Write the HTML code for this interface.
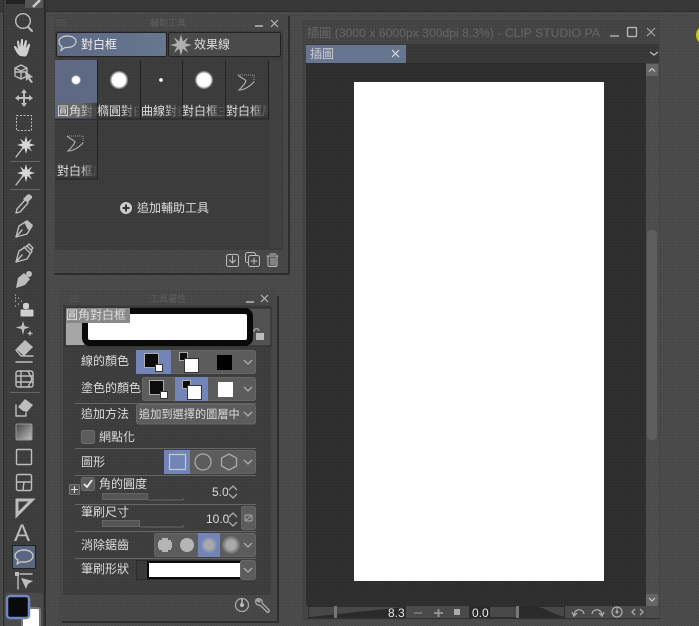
<!DOCTYPE html>
<html><head><meta charset="utf-8"><style>
html,body{margin:0;padding:0;background:#4a4a4a;width:699px;height:626px;overflow:hidden}
svg{display:block}
text{font-family:"Liberation Sans","Noto Sans CJK TC",sans-serif;font-size:12px;fill:#dcdcdc}
.i{fill:none;stroke:#bdbdbd;stroke-width:1.4;stroke-linejoin:round;stroke-linecap:round}
.t{stroke-width:1}
.f{fill:#bdbdbd;stroke:none}
.c{fill:#5c5c5c;stroke:#666;stroke-width:1}
.w{fill:#fff}.k{fill:#0c0c0c;stroke:#aaa;stroke-width:1}
.v{fill:none;stroke:#aaa;stroke-width:1.3}
</style></head><body>
<svg width="699" height="626" viewBox="0 0 699 626" xmlns="http://www.w3.org/2000/svg">
<defs>
<pattern id="t" width="3" height="3" patternUnits="userSpaceOnUse"><rect width="1" height="1" fill="#000" opacity=".07"/><rect x="2" y="1" width="1" height="1" fill="#fff" opacity=".03"/></pattern>
<linearGradient id="fd"><stop offset="0" stop-color="#3b3b3b" stop-opacity="0"/><stop offset="1" stop-color="#3b3b3b" stop-opacity=".95"/></linearGradient>
<linearGradient id="gr" x1="0" y1="0" x2="1" y2="1"><stop offset="0" stop-color="#444"/><stop offset="1" stop-color="#c0c0c0"/></linearGradient>
<linearGradient id="tb" x1="0" y1="0" x2="1" y2="0"><stop offset="0" stop-color="#5e6a84"/><stop offset="1" stop-color="#687690"/></linearGradient>
<radialGradient id="dot"><stop offset=".7" stop-color="#fff"/><stop offset="1" stop-color="#fff" stop-opacity="0"/></radialGradient>
<radialGradient id="aa"><stop offset=".5" stop-color="#aaa"/><stop offset="1" stop-color="#aaa" stop-opacity=".15"/></radialGradient>
<path id="star" d="M0-9 1.600-3 6-6.500 3.400-1.600 9 0 3.400 1.600 6 6.500 1.600 3 0 9-1.600 3-6 6.500-3.400 1.600-9 0-3.400-1.600-6-6.500-1.600-3Z"/>
<g id="tail" fill="none"><path d="M-9-7H7V0" stroke="#999" stroke-width="1" stroke-dasharray="1 1"/><path d="M-9-7C-6-4-2-3-1-1-2 2-5 5-8 8-3 8 2 5 7 0" stroke="#b5b5b5" stroke-width="1.100"/></g>
</defs>
<rect width="699" height="626" fill="#4a4a4a"/>
<rect width="699" height="626" fill="url(#t)"/>
<!-- top bar -->
<rect width="699" height="11" fill="#383838"/><rect y="11" width="699" height="1" fill="#2c2c2c"/>
<!-- toolbar -->
<rect x="3" y="0" width="41" height="626" fill="#3d3d3d"/><rect x="44" y="0" width="2" height="626" fill="#2e2e2e"/><rect x="3" y="0" width="1" height="626" fill="#2e2e2e"/>
<rect x="3" y="0" width="41" height="626" fill="url(#t)"/>
<rect x="6" y="0" width="19" height="4" fill="#222"/><rect x="25" y="0" width="18" height="8" fill="#555"/><path d="M33 7 40 0" stroke="#ccc" stroke-width="2.500"/>
<circle cx="23" cy="21" r="7.300" class="i"/><path class="i" style="stroke-width:2" d="M28 27l4 4"/>
<path fill="#cfcfcf" d="M20 56c-3-2-5-6-6-9 0-2 2-1 3 1l1 1-1-7c0-2 2-2 2 0l1 5 1-7c0-1.500 2-1.500 2 0v7l2-6c.500-1.500 2-1 2 .5l-1 7 2-4c1-1.500 2.500-.5 2 1l-2 7c-1 3-2 4-3 4Z"/>
<path class="i" d="M21 65l6 3v8l-6 3-6-3v-8ZM15 68l6 3 6-3M21 71v8M15 72h12"/><path class="f" d="M25 71l8 6-3 1 3 4-2 1-3-4-2 2Z"/>
<path class="f" d="M24 89l3 4h-2v4h4v-2l4 3-4 3v-2h-4v4h2l-3 4-3-4h2v-4h-4v2l-4-3 4-3v2h4v-4h-2Z"/>
<rect x="16.500" y="115.500" width="15" height="15" class="i" style="stroke-dasharray:2 1.500;stroke-linecap:butt;stroke-width:1"/>
<use href="#star" x="26" y="145" fill="#d8d8d8"/><path class="i" d="M22 149l-6 8"/>
<rect x="10" y="161" width="30" height="1" fill="#666"/>
<use href="#star" x="26" y="173" fill="#d8d8d8"/><path class="i" d="M22 177l-6 8"/>
<rect x="10" y="189" width="30" height="1" fill="#666"/>
<path class="i" d="M25 200l-8 9-1 4 4-1 8-9"/><path class="f" d="M24 198l3-3 2-1 3 2 0 2-3 3-1 2-5-4Z"/>
<path class="i" d="M16 237l3-11 8-5 5 5-5 8Z"/><path class="f" d="M24 222l3-2 6 5-2 3-3 2Z"/><path class="i" d="M16 237l6-7"/>
<path class="i" d="M16 262l3-11 8-5 5 5-5 8ZM16 262l6-7M24 247l6 6"/><path class="i" d="M27 246l2-2 4 4-2 2"/>
<path class="f" d="M16 288l2-10 6-5 6 6-5 6Z"/><circle cx="29" cy="274" r="3" class="f"/>
<rect x="20.500" y="309.500" width="13" height="7" rx="1" fill="#d0d0d0"/><rect x="23" y="303" width="6" height="6" rx="2" fill="#d0d0d0"/><path d="M15 295h1M18 298h1M15 301h1M21 301h1M18 304h1M15 306h1M15 298h1" stroke="#aaa" stroke-width="1.500"/>
<path class="f" d="M23 322l1.500 5 5 1.500-5 1.500-1.500 6-1.500-6-6-1.500 6-1.500ZM30 331l.8 2.500 2.500.8-2.500.8-.8 2.500-.8-2.500-2.500-.8 2.500-.8Z" transform="translate(0,-1)"/>
<path class="f" d="M16 349l9-9 8 7-9 9Z"/><path class="i" d="M16 350l5 6h12"/><path class="i" d="M16 362h16"/>
<rect x="16" y="371" width="17" height="16" rx="2" class="i"/><path class="i" d="M16 376h17M16 382h17M21 371v16M28 371l4 8-4 8"/>
<rect x="10" y="392" width="30" height="1" fill="#666"/>
<path class="i" d="M16 405v11h10v-3"/><path class="f" d="M25 399l8 6-6 7-4-1-5-4Z"/>
<rect x="16" y="424" width="16" height="16" rx="1.500" fill="url(#gr)" stroke="#999"/>
<rect x="16.500" y="449.500" width="15" height="15" rx="1" class="i"/>
<rect x="16.500" y="474.500" width="15" height="16" rx="1.500" class="i"/><path class="i" d="M17 482h14M24 482l-1 8"/>
<path d="M17 500h15l-15 15Z" fill="none" stroke="#bdbdbd" stroke-width="3"/>
<text x="14" y="541" style="font-size:24px;fill:#bbb">A</text>
<rect x="12.500" y="545.500" width="23" height="23" fill="#5a6680" stroke="#1f2328"/>
<path class="i" style="stroke:#c8c8c8" d="M24 550c5 0 9 2.500 9 6s-4 6-9 6c-1 0-2 0-3-.3l-4 2.300 1-4c-2-1-3-2.500-3-4 0-3.500 4-6 9-6Z"/>
<path class="i" d="M18 574v15M20 574h12"/><rect x="15" y="572" width="4" height="4" class="f"/><path class="f" d="M21 578l12 3-5 3-2 5Z"/>
<rect x="5" y="593" width="38" height="33" fill="#4a4a4a"/>
<rect x="22" y="608" width="18" height="22" rx="2" fill="#fff" stroke="#777" stroke-width="2"/>
<rect x="7" y="596" width="22" height="22" rx="3" fill="#0a0a0a" stroke="#7187c0" stroke-width="2.500"/>

<!-- subtool panel -->
<rect x="54" y="14" width="234" height="259" fill="#474747"/>
<rect x="288" y="16" width="2" height="258" fill="#2e2e2e"/><rect x="54" y="273" width="236" height="2" fill="#2e2e2e"/>
<rect x="55" y="31" width="228" height="219" fill="#3c3c3c"/>
<rect x="54" y="14" width="234" height="259" fill="url(#t)"/>
<text x="150" y="26" style="font-size:9px;fill:#5f5f5f">輔助工具</text>
<path d="M56 20h10M56 22.500h10M56 25h10" stroke="#555"/>
<path d="M255 26h8" stroke="#bbb" stroke-width="1.500"/><path d="M271 20l7 7m0-7-7 7" stroke="#bbb" stroke-width="1.100"/>
<rect x="56.500" y="32.500" width="110" height="24" rx="2" fill="url(#tb)" stroke="#222"/>
<rect x="168.500" y="32.500" width="112" height="24" rx="2" fill="#4a4a4a" stroke="#222"/>
<path d="M67 36c5 0 9 2 9 5.500s-4 6-9 6h-2l-4 3 1-4c-2-1-3-2.500-3-5 0-3.500 4-5.500 8-5.500Z" fill="none" stroke="#ccc" stroke-width="1.200"/>
<text x="81" y="48.500" style="font-size:12px;fill:#eee">對白框</text>
<use href="#star" x="181" y="45" fill="#b0b0b0" transform="translate(-36.200,-9) scale(1.200)"/>
<text x="194" y="48.500" style="font-size:12px;fill:#ddd">效果線</text>
<rect x="270" y="60" width="12" height="188" fill="#414141"/>
<rect x="55" y="60" width="42" height="59" fill="#5e6a84"/>
<g fill="none" stroke="#222"><path d="M97.500 60v59H55M140.500 60v59H97M182.500 60v59H140M225.500 60v59H182M268.500 60v59H225M97.500 120v59H55"/></g>
<circle cx="76" cy="80" r="5" fill="url(#dot)"/><circle cx="119" cy="80" r="9.500" fill="url(#dot)"/><circle cx="161" cy="80" r="2.200" fill="url(#dot)"/><circle cx="204" cy="80" r="9.500" fill="url(#dot)"/>
<use href="#tail" x="247" y="82"/><use href="#tail" x="76" y="143"/>
<rect x="57" y="103" width="38" height="15" rx="2" fill="#666"/>
<svg x="55" y="102" width="42" height="17"><text x="2" y="13">圓角對白框</text></svg>
<svg x="97" y="102" width="43" height="17"><text x="0" y="13">橢圓對白框</text></svg>
<svg x="140" y="102" width="42" height="17"><text x="1" y="13">曲線對白框</text></svg>
<svg x="182" y="102" width="43" height="17"><text x="0" y="13">對白框主體</text></svg>
<svg x="225" y="102" width="43" height="17"><text x="1" y="13">對白框尾部</text></svg>
<svg x="55" y="162" width="42" height="17"><text x="2" y="13">對白框尾部</text></svg>
<rect x="80" y="103" width="17" height="15" fill="url(#fd)"/><rect x="122" y="103" width="18" height="15" fill="url(#fd)"/><rect x="164" y="103" width="18" height="15" fill="url(#fd)"/><rect x="207" y="103" width="18" height="15" fill="url(#fd)"/><rect x="250" y="103" width="18" height="15" fill="url(#fd)"/><rect x="80" y="163" width="17" height="15" fill="url(#fd)"/>
<circle cx="126" cy="208" r="6" fill="#ccc"/><path d="M126 204.500v7M122.500 208h7" stroke="#333" stroke-width="2"/>
<text x="137" y="212">追加輔助工具</text>
<rect x="226.500" y="254.500" width="12" height="12" rx="2" class="i t"/><path class="i t" d="M232.500 256v7m-3-3 3 3 3-3"/>
<rect x="245.500" y="252.500" width="10" height="10" rx="2" class="i t"/><rect x="248.500" y="255.500" width="11" height="11" rx="2" fill="#474747" stroke="#bdbdbd"/><path class="i t" d="M254 258v6M251 261h6"/>
<path class="i t" d="M267 256h11M268 256v9c0 1 .5 1.500 1.500 1.500h6c1 0 1.500-.5 1.500-1.500v-9M270 254h6M271 258v7M273 258v7M275 258v7"/>

<!-- tool property panel -->
<rect x="59" y="290" width="218" height="331" fill="#474747"/><rect x="277" y="296" width="2" height="326" fill="#2e2e2e"/><rect x="62" y="621" width="217" height="2" fill="#2e2e2e"/>
<rect x="63" y="305" width="208" height="290" fill="#3d3d3d"/>
<rect x="59" y="290" width="218" height="331" fill="url(#t)"/>
<text x="150" y="302" style="font-size:9px;fill:#5f5f5f">工具屬性</text>
<path d="M70 296h9M70 298.500h9M70 301h9" stroke="#555"/>
<path d="M246 302h8" stroke="#bbb" stroke-width="1.500"/><path d="M261 295l7 7m0-7-7 7" stroke="#bbb" stroke-width="1.100"/>
<rect x="65" y="308" width="206" height="38" fill="#525252" stroke="#2a2a2a"/>
<rect x="66" y="309" width="18" height="36" fill="#a6a6a6"/>
<rect x="85" y="311" width="165" height="32" rx="5" fill="#fff" stroke="#0a0a0a" stroke-width="6"/>
<rect x="66" y="308" width="64" height="15" fill="#888"/>
<text x="66" y="319">圓角對白框</text>
<rect x="256" y="333" width="8" height="7" fill="#bbb"/><path class="v" d="M254 332v-1c0-3 5-3 5 0"/>
<g fill="#666"><rect x="75" y="403" width="181" height="1"/><rect x="75" y="448" width="181" height="1"/><rect x="75" y="475" width="181" height="1"/><rect x="75" y="504" width="181" height="1"/><rect x="75" y="531" width="181" height="1"/><rect x="75" y="558" width="181" height="1"/></g>
<text x="81" y="365">線的顏色</text>
<rect x="136.500" y="350.500" width="119" height="23" rx="2" class="c"/><rect x="136" y="350" width="35" height="24" rx="1" fill="#7185b8"/>
<rect x="144.500" y="353.500" width="14" height="14" class="k"/><rect x="155.500" y="364.500" width="7" height="7" class="w" stroke="#333"/>
<rect x="179.500" y="352.500" width="8" height="8" class="k"/><rect x="184.500" y="358.500" width="14" height="14" class="w" stroke="#333"/>
<rect x="217" y="355" width="15" height="15" fill="#000"/><path class="v" d="M244 360l4 4 4-4"/>
<text x="81" y="392">塗色的顏色</text>
<rect x="142.500" y="377.500" width="113" height="23" rx="2" class="c"/><rect x="175" y="377" width="33" height="24" fill="#7185b8"/>
<rect x="149.500" y="380.500" width="14" height="14" class="k"/><rect x="160.500" y="391.500" width="7" height="7" class="w" stroke="#333"/>
<rect x="182.500" y="380.500" width="8" height="8" class="k"/><rect x="187.500" y="385.500" width="14" height="14" class="w" stroke="#333"/>
<rect x="218" y="382" width="15" height="15" fill="#fff"/><path class="v" d="M244 387l4 4 4-4"/>
<text x="81" y="418">追加方法</text>
<rect x="136.500" y="404.500" width="119" height="19.500" rx="2" class="c"/>
<svg x="138" y="405" width="104" height="18"><text x="1" y="13" style="font-size:11.200px">追加到選擇的圖層中</text></svg><path class="v" d="M244 412l4 4 4-4"/>
<rect x="81.500" y="430.500" width="13" height="13" rx="2" fill="#5c5c5c" stroke="#6c6c6c"/>
<text x="99" y="441">網點化</text>
<text x="81" y="466">圖形</text>
<rect x="164.500" y="450.500" width="91" height="23" rx="2" class="c"/><rect x="164" y="450" width="26" height="24" fill="#7185b8"/>
<rect x="169.500" y="454.500" width="16" height="15" fill="none" stroke="#c8c8c8" stroke-width="1.200"/><circle cx="203" cy="462" r="8" class="v"/><path class="v" d="M229 454l7.500 4v8l-7.500 4-7.500-4v-8Z"/><path class="v" d="M244 460l4 4 4-4"/>
<rect x="69.500" y="484.500" width="10" height="10" rx="1" fill="#555" stroke="#777"/><path d="M74.500 486v7M71 489.500h7" stroke="#ddd"/>
<rect x="81.500" y="477.500" width="13" height="13" rx="2" fill="#5c5c5c" stroke="#6c6c6c"/><path d="M84 484l3 3 5-7" fill="none" stroke="#eee" stroke-width="1.800"/>
<text x="99" y="488">角的圓度</text>
<rect x="102.500" y="493.500" width="45" height="6" fill="#555" stroke="#666"/><path d="M148 500h35v-2" fill="none" stroke="#666"/>
<text x="212" y="496">5.0</text><path class="v" d="M229 490l4-4 4 4M229 494l4 4 4-4"/>
<text x="81" y="516">筆刷尺寸</text>
<rect x="102.500" y="520.500" width="37" height="6" fill="#555" stroke="#666"/><path d="M140 527h43v-2" fill="none" stroke="#666"/>
<text x="206" y="523">10.0</text><path class="v" d="M229 517l4-4 4 4M229 522l4 4 4-4"/>
<rect x="241.500" y="506.500" width="14" height="23" rx="2" class="c"/><rect x="245" y="515" width="7" height="6" rx="1" class="v" style="stroke-width:1"/><path class="v" style="stroke-width:1" d="M246 520l5-4"/>
<text x="81" y="549">消除鋸齒</text>
<rect x="154.500" y="533.500" width="101" height="23" rx="2" class="c"/><rect x="198" y="533" width="22" height="24" fill="#7185b8"/>
<path d="M162 538h6v2h3v2h1v6h-1v2h-3v2h-6v-2h-3v-2h-1v-6h1v-2h3Z" fill="#b5b5b5"/><circle cx="187" cy="545" r="7" fill="#b5b5b5"/><circle cx="209" cy="545" r="8" fill="url(#aa)"/><circle cx="231" cy="545" r="9" fill="url(#aa)"/><path class="v" d="M244 543l4 4 4-4"/>
<text x="81" y="573">筆刷形狀</text>
<rect x="136.500" y="560.500" width="104" height="19" fill="#3a3a3a" stroke="#2c2c2c"/><rect x="147" y="561" width="93" height="18" fill="#0a0a0a"/><rect x="149" y="563" width="91" height="14" fill="#fff"/>
<rect x="240.500" y="560.500" width="15" height="19" rx="2" class="c"/><path class="v" d="M244 568l4 4 4-4"/>
<circle cx="242" cy="605" r="6.500" class="v"/><path d="M242 599v6" stroke="#bbb" stroke-width="1.500"/><circle cx="242" cy="605" r="2" fill="#bbb"/>
<path class="v" d="M257 599c3-1 6 1 5 4l7 7c1 1-1 3-2 2l-7-7c-3 1-5-2-4-5l3 2 1-1Z"/>

<!-- canvas window -->
<rect x="302" y="20" width="358" height="600" fill="#444"/>
<rect x="306" y="44" width="353" height="19" fill="#383838"/>
<rect x="306" y="63" width="340" height="543" fill="#2e2e2e"/>
<rect x="646" y="63" width="13" height="555" fill="#4d4d4d"/>
<rect x="306" y="606" width="340" height="12" fill="#4a4a4a"/><rect x="306" y="618" width="354" height="1" fill="#333"/>
<rect x="302" y="20" width="358" height="600" fill="url(#t)"/>
<text x="307" y="37" style="font-size:12.200px;fill:#676767">插圖 (3000 x 6000px 300dpi 8.3%)  - CLIP STUDIO PA</text>
<path d="M610 36h9" stroke="#aaa" stroke-width="1.500"/><rect x="627.500" y="27.500" width="9" height="9" rx="1" fill="none" stroke="#bbb" stroke-width="1.300"/><path d="M647 28l8 8m0-8-8 8" stroke="#aaa" stroke-width="1.200"/>
<rect x="306" y="45" width="100" height="18" fill="#687590"/>
<text x="310" y="58" style="fill:#cfcfcf">插圖</text><path d="M392 50l7 7m0-7-7 7" stroke="#ddd" stroke-width="1.200"/>
<path d="M650 52l4 3 4-3" fill="none" stroke="#bbb" stroke-width="1.300"/>
<rect x="354" y="82" width="250" height="499" fill="#fff"/>
<rect x="646" y="64" width="12" height="12" rx="1" fill="#666"/><path d="M649 71.500l3-3 3 3" fill="none" stroke="#ccc" stroke-width="1.200"/>
<rect x="647" y="230" width="10" height="210" rx="4" fill="#5e5e5e"/>
<rect x="646" y="594" width="12" height="12" rx="1" fill="#666"/><path d="M649 598l3 3 3-3" fill="none" stroke="#ccc" stroke-width="1.200"/>
<rect x="308.500" y="606.500" width="97" height="11" fill="#484848" stroke="#2d2d2d"/><path d="M310 617l95-10v10Z" fill="#2a2a2a"/><rect x="334" y="606" width="3" height="12" fill="#777"/>
<text x="388" y="617" style="fill:#e8e8e8">8.3</text>
<path d="M414 613h8" stroke="#777" stroke-width="1.800"/><path d="M434 613h9M438.500 609v8" stroke="#999" stroke-width="1.800"/><rect x="454" y="609" width="6" height="6" fill="#aaa"/>
<rect x="469.500" y="606.500" width="95" height="11" fill="#484848" stroke="#2d2d2d"/><rect x="470" y="607" width="20" height="10" fill="#2a2a2a"/><path d="M518 617v-10h18c8 0 12 5 28 10Z" fill="#2a2a2a"/><rect x="516" y="606" width="3" height="12" fill="#777"/>
<text x="472" y="617" style="fill:#e8e8e8">0.0</text>
<path class="v" d="M574 616c0-8 9-8 10-2M572 612l2 4 3-3"/><path class="v" d="M592 614c1-6 10-6 10 2M599 613l3 3 2-4"/>
<circle cx="617" cy="612" r="5" class="v"/><circle cx="617" cy="612" r="1.500" fill="#aaa"/><path d="M617 607v4" stroke="#aaa"/>
<path class="v" d="M635 609l-3 3 3 3M640 609l3 3-3 3"/>
<!-- yellow cursor -->
<ellipse cx="706" cy="35" rx="10" ry="10" fill="#c8c820"/>
</svg>
</body></html>
